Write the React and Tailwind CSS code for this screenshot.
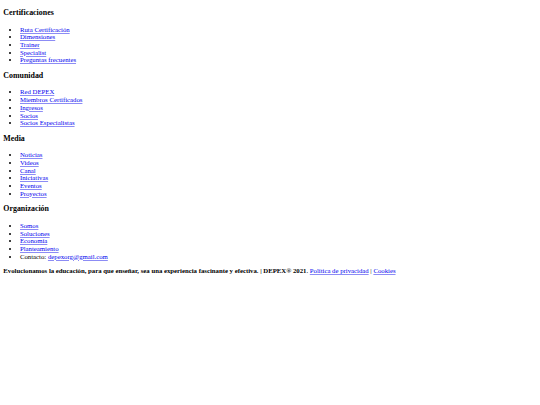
import React from 'react';

const sections = [
  { title: 'Certificaciones', links: ['Ruta Certificación', 'Dimensiones', 'Trainer', 'Specialist', 'Preguntas frecuentes'] },
  { title: 'Comunidad', links: ['Red DEPEX', 'Miembros Certificados', 'Ingresos', 'Socios', 'Socios Especialistas'] },
  { title: 'Media', links: ['Noticias', 'Videos', 'Canal', 'Iniciativas', 'Eventos', 'Proyectos'] },
  { title: 'Organización', links: ['Somos', 'Soluciones', 'Economía', 'Planteamiento'] },
];

const Link = ({ children }) => (
  <a href="#" className="text-[#0000ee] underline decoration-[#8c8cf5]">
    {children}
  </a>
);

export default function App() {
  return (
    <div className="min-h-[405px] bg-white px-[3.33px] pt-px text-[6.75px] leading-[7.67px] text-black font-['Liberation_Serif',serif]">
      {sections.map((s, i) => (
        <div key={s.title}>
          <h3 className="my-[7.8px] text-[7.9px] leading-[8.97px] font-bold">{s.title}</h3>
          <ul className="my-[6.67px] list-disc pl-[16.67px]">
            {s.links.map((l) => (
              <li key={l}>
                <Link>{l}</Link>
              </li>
            ))}
            {i === sections.length - 1 && (
              <li>
                Contacto: <Link>depexorg@gmail.com</Link>
              </li>
            )}
          </ul>
        </div>
      ))}
      <p className="my-[6.67px]">
        <b className="font-bold">
          Evolucionamos la educación, para que enseñar, sea una experiencia fascinante y efectiva. | DEPEX® 2021
        </b>
        . <Link>Política de privacidad</Link> | <Link>Cookies</Link>
      </p>
    </div>
  );
}
